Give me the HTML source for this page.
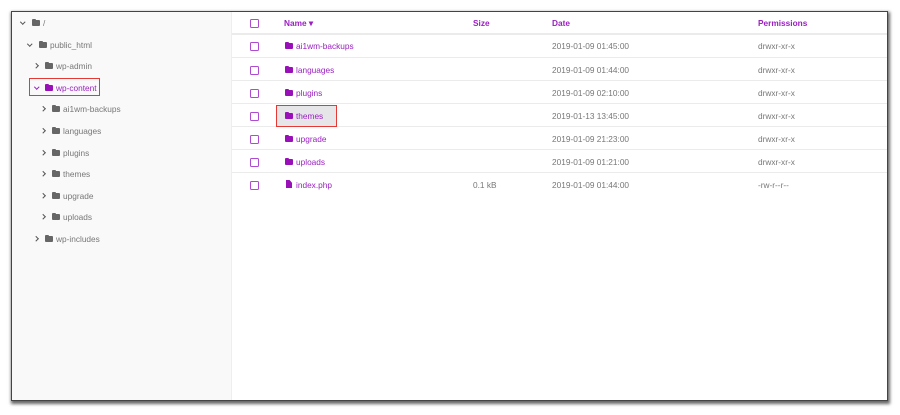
<!DOCTYPE html><html><head><style>
body{margin:0;width:900px;height:415px;background:#fff;font-family:"Liberation Sans",sans-serif;font-size:8.3px;position:relative;overflow:hidden}
.box{position:absolute;left:11px;top:11px;width:875px;height:388px;background:#fff;border:1px solid #444;box-shadow:1px 2px 3px 1px rgba(0,0,0,.6)}
.left{position:absolute;left:0;top:0;width:219px;height:388px;background:#f9f9f9;border-right:1px solid #eee}
.t{position:absolute;color:#777;white-space:nowrap}
.chev{position:absolute;width:2.5px;height:2.5px;border-right:1.3px solid #555;border-bottom:1.3px solid #555}
.r{transform:rotate(-45deg)}.d{transform:rotate(45deg)}
.f{position:absolute;width:8px;height:6px;background:#666;border-radius:1px}
.f:before{content:"";position:absolute;left:0;top:-1.5px;width:4px;height:2px;background:#666;border-radius:1px 1px 0 0}
.p{background:#9a10b8}.p:before{background:#9a10b8}
.line{position:absolute;left:220px;right:0;height:1px;background:#ebebeb}
.cb{position:absolute;left:238px;width:7px;height:7px;border:1px solid #b04ad0;border-radius:1.5px}
.n{position:absolute;color:#9a20c0;white-space:nowrap}
.g{position:absolute;color:#777;white-space:nowrap}
.h{position:absolute;color:#9a20c0;font-weight:bold;top:6px}
</style></head><body>
<div class="box">
<div class="left"></div>
<div style="position:absolute;left:17px;top:66px;width:69px;height:16px;border:1.5px solid #e53935"></div>
<span class="chev d" style="left:9px;top:8px"></span><div class="f" style="left:20px;top:8px"></div><span class="t" style="left:31px;top:6px">/</span>
<span class="chev d" style="left:16px;top:30px"></span><div class="f" style="left:27px;top:30px"></div><span class="t" style="left:38px;top:28px">public_html</span>
<span class="chev r" style="left:22px;top:52px"></span><div class="f" style="left:33px;top:51px"></div><span class="t" style="left:44px;top:49px">wp-admin</span>
<span class="chev d" style="left:23px;top:73px;border-color:#9a20c0"></span><div class="f p" style="left:33px;top:73px"></div><span class="n" style="left:44px;top:71px">wp-content</span>
<span class="chev r" style="left:29px;top:95px"></span><div class="f" style="left:40px;top:94px"></div><span class="t" style="left:51px;top:92px">ai1wm-backups</span>
<span class="chev r" style="left:29px;top:117px"></span><div class="f" style="left:40px;top:116px"></div><span class="t" style="left:51px;top:114px">languages</span>
<span class="chev r" style="left:29px;top:139px"></span><div class="f" style="left:40px;top:138px"></div><span class="t" style="left:51px;top:136px">plugins</span>
<span class="chev r" style="left:29px;top:160px"></span><div class="f" style="left:40px;top:159px"></div><span class="t" style="left:51px;top:157px">themes</span>
<span class="chev r" style="left:29px;top:182px"></span><div class="f" style="left:40px;top:181px"></div><span class="t" style="left:51px;top:179px">upgrade</span>
<span class="chev r" style="left:29px;top:203px"></span><div class="f" style="left:40px;top:202px"></div><span class="t" style="left:51px;top:200px">uploads</span>
<span class="chev r" style="left:22px;top:225px"></span><div class="f" style="left:33px;top:224px"></div><span class="t" style="left:44px;top:222px">wp-includes</span>
<div class="cb" style="top:7px"></div>
<span class="h" style="left:272px">Name ▾</span><span class="h" style="left:461px">Size</span><span class="h" style="left:540px">Date</span><span class="h" style="left:746px">Permissions</span>
<div class="line" style="top:21px;height:1.5px"></div>
<div class="line" style="top:45px"></div><div class="line" style="top:68px"></div><div class="line" style="top:91px"></div><div class="line" style="top:114px"></div><div class="line" style="top:137px"></div><div class="line" style="top:160px"></div>
<div style="position:absolute;left:264px;top:93px;width:59px;height:20px;background:#e6e6e9;border:1.5px solid #e53935"></div>
<div class="cb" style="top:30px"></div><div class="f p" style="left:273px;top:31px"></div><span class="n" style="left:284px;top:29px">ai1wm-backups</span><span class="g" style="left:540px;top:29px">2019-01-09 01:45:00</span><span class="g" style="left:746px;top:29px">drwxr-xr-x</span>
<div class="cb" style="top:54px"></div><div class="f p" style="left:273px;top:55px"></div><span class="n" style="left:284px;top:53px">languages</span><span class="g" style="left:540px;top:53px">2019-01-09 01:44:00</span><span class="g" style="left:746px;top:53px">drwxr-xr-x</span>
<div class="cb" style="top:77px"></div><div class="f p" style="left:273px;top:78px"></div><span class="n" style="left:284px;top:76px">plugins</span><span class="g" style="left:540px;top:76px">2019-01-09 02:10:00</span><span class="g" style="left:746px;top:76px">drwxr-xr-x</span>
<div class="cb" style="top:100px"></div><div class="f p" style="left:273px;top:101px"></div><span class="n" style="left:284px;top:99px">themes</span><span class="g" style="left:540px;top:99px">2019-01-13 13:45:00</span><span class="g" style="left:746px;top:99px">drwxr-xr-x</span>
<div class="cb" style="top:123px"></div><div class="f p" style="left:273px;top:124px"></div><span class="n" style="left:284px;top:122px">upgrade</span><span class="g" style="left:540px;top:122px">2019-01-09 21:23:00</span><span class="g" style="left:746px;top:122px">drwxr-xr-x</span>
<div class="cb" style="top:146px"></div><div class="f p" style="left:273px;top:147px"></div><span class="n" style="left:284px;top:145px">uploads</span><span class="g" style="left:540px;top:145px">2019-01-09 01:21:00</span><span class="g" style="left:746px;top:145px">drwxr-xr-x</span>
<div class="cb" style="top:169px"></div><div style="position:absolute;left:274px;top:168px;width:6px;height:8px;background:#9a10b8;clip-path:polygon(0 0,60% 0,100% 35%,100% 100%,0 100%)"></div><span class="n" style="left:284px;top:168px">index.php</span><span class="g" style="left:461px;top:168px">0.1 kB</span><span class="g" style="left:540px;top:168px">2019-01-09 01:44:00</span><span class="g" style="left:746px;top:168px">-rw-r--r--</span>
</div>
</body></html>
